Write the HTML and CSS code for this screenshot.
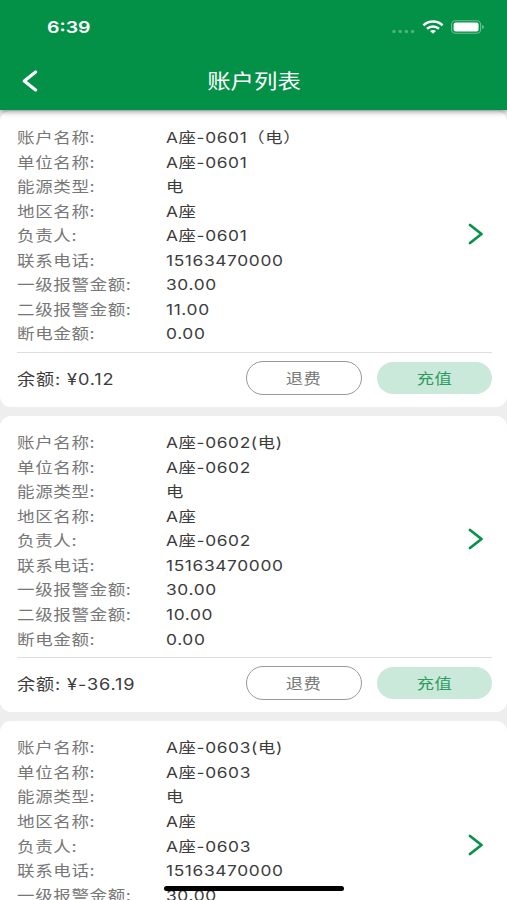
FILE: index.html
```html
<!DOCTYPE html>
<html lang="zh-CN">
<head>
<meta charset="utf-8">
<meta name="viewport" content="width=device-width, initial-scale=1">
<title>账户列表</title>
<link rel="stylesheet" href="styles.css">
</head>
<body>
<div class="app">
  <header class="header">
    <div class="status">
      <span class="time">6:39</span>
      <div class="indicators">
        <svg class="signal" width="23" height="5" viewBox="0 0 23 5"><g fill="#fff" opacity=".3"><circle cx="2" cy="2.5" r="1.7"/><circle cx="8.2" cy="2.5" r="1.7"/><circle cx="14.4" cy="2.5" r="1.7"/><circle cx="20.6" cy="2.5" r="1.7"/></g></svg>
        <svg class="wifi" width="22" height="14" viewBox="0 0 22 14"><g fill="none" stroke="#fff" stroke-width="2.5"><path d="M1.4 5.3C6.8.3 15.2.3 20.6 5.3"/><path d="M5 8.7C8.4 5.7 13.6 5.7 17 8.7"/></g><path d="M8 11c1.8-1.5 4.200-1.500 6 0l-3 2.700z" fill="#fff"/></svg>
        <svg class="battery" width="34" height="14" viewBox="0 0 34 14"><rect x=".6" y=".8" width="29" height="12.400" rx="3.800" fill="none" stroke="#fff" stroke-opacity=".42" stroke-width="1.100"/><rect x="2.600" y="2.400" width="25" height="9.200" rx="2" fill="#fff"/><path d="M31.200 5v4c2-.6 2-3.400 0-4z" fill="#fff" fill-opacity=".5"/></svg>
      </div>
    </div>
    <div class="titlebar">
      <svg class="back" width="16" height="22" viewBox="0 0 16 22"><path d="M13.600 1.900L2.300 11l11.300 9.100" fill="none" stroke="#fff" stroke-width="3.200" stroke-linejoin="round" stroke-linecap="round"/></svg>
      <h1><span>账户列表</span></h1>
    </div>
  </header>

  <main class="list">
    <section class="card">
      <div class="info">
        <dl>
          <dt>账户名称:</dt><dd>A座-0601（电）</dd>
          <dt>单位名称:</dt><dd>A座-0601</dd>
          <dt>能源类型:</dt><dd>电</dd>
          <dt>地区名称:</dt><dd>A座</dd>
          <dt>负责人:</dt><dd>A座-0601</dd>
          <dt>联系电话:</dt><dd>15163470000</dd>
          <dt>一级报警金额:</dt><dd>30.00</dd>
          <dt>二级报警金额:</dt><dd>11.00</dd>
          <dt>断电金额:</dt><dd>0.00</dd>
        </dl>
        <svg class="chevron" width="16" height="22" viewBox="0 0 16 22"><path d="M2 2l11.500 9L2 20" fill="none" stroke="#08914a" stroke-width="2.800" stroke-linejoin="round" stroke-linecap="round"/></svg>
      </div>
      <div class="foot">
        <span class="balance">余额: ¥0.12</span>
        <button class="btn refund"><span>退费</span></button>
        <button class="btn recharge"><span>充值</span></button>
      </div>
    </section>

    <section class="card">
      <div class="info">
        <dl>
          <dt>账户名称:</dt><dd>A座-0602(电)</dd>
          <dt>单位名称:</dt><dd>A座-0602</dd>
          <dt>能源类型:</dt><dd>电</dd>
          <dt>地区名称:</dt><dd>A座</dd>
          <dt>负责人:</dt><dd>A座-0602</dd>
          <dt>联系电话:</dt><dd>15163470000</dd>
          <dt>一级报警金额:</dt><dd>30.00</dd>
          <dt>二级报警金额:</dt><dd>10.00</dd>
          <dt>断电金额:</dt><dd>0.00</dd>
        </dl>
        <svg class="chevron" width="16" height="22" viewBox="0 0 16 22"><path d="M2 2l11.500 9L2 20" fill="none" stroke="#08914a" stroke-width="2.800" stroke-linejoin="round" stroke-linecap="round"/></svg>
      </div>
      <div class="foot">
        <span class="balance">余额: ¥-36.19</span>
        <button class="btn refund"><span>退费</span></button>
        <button class="btn recharge"><span>充值</span></button>
      </div>
    </section>

    <section class="card">
      <div class="info">
        <dl>
          <dt>账户名称:</dt><dd>A座-0603(电)</dd>
          <dt>单位名称:</dt><dd>A座-0603</dd>
          <dt>能源类型:</dt><dd>电</dd>
          <dt>地区名称:</dt><dd>A座</dd>
          <dt>负责人:</dt><dd>A座-0603</dd>
          <dt>联系电话:</dt><dd>15163470000</dd>
          <dt>一级报警金额:</dt><dd>30.00</dd>
        </dl>
        <svg class="chevron" width="16" height="22" viewBox="0 0 16 22"><path d="M2 2l11.500 9L2 20" fill="none" stroke="#08914a" stroke-width="2.800" stroke-linejoin="round" stroke-linecap="round"/></svg>
      </div>
    </section>
  </main>
  <div class="home-indicator"></div>
</div>
</body>
</html>
```
FILE: styles.css
```css
* { box-sizing: border-box; }

body {
  margin: 0;
  font-family: Inter, "Noto Sans CJK SC", sans-serif;
  background: #eee;
}

.app {
  position: relative;
  height: 900px;
  overflow: hidden;
  display: flex;
  flex-direction: column;
}

.header {
  flex: none;
  height: 110px;
  background: #029147;
  color: #fff;
  box-shadow: 0 1px 6px rgba(0, 0, 0, .5);
  z-index: 1;
}

.status {
  height: 54px;
  padding: 0 22px 0 47px;
  display: flex;
  align-items: center;
  justify-content: space-between;
}

.time {
  font-size: 16.500px;
  font-weight: 600;
  transform: scaleX(1.18);
  transform-origin: left;
}

.indicators { display: flex; align-items: center; }
.signal { margin: 9px 7px 0 0; }
.wifi { margin-right: 7px; }

.titlebar {
  height: 56px;
  padding: 0 22px;
  display: grid;
  grid-template-columns: 16px 1fr 16px;
  align-items: center;
}

.back { margin-top: -2px; }

h1 {
  margin: -1px 0 0;
  text-align: center;
  font-size: 20px;
  font-weight: 400;
  line-height: 30px;
}

h1 span { display: inline-block; transform: scaleX(1.17); }

.list {
  flex: none;
  display: flex;
  flex-direction: column;
  gap: 9px;
  padding-top: 1px;
}

.card {
  height: 296.200px;
  padding: 15px 15px 0 17px;
  border-radius: 11px;
  background: #fff;
}

.info {
  height: 226.500px;
  display: flex;
  align-items: center;
  justify-content: space-between;
  border-bottom: 1px solid #dedede;
}

dl {
  align-self: flex-start;
  margin: 0;
  display: grid;
  grid-template-columns: 149px 200px;
  grid-auto-rows: 24.550px;
}

dt, dd {
  margin: 0;
  line-height: 24.550px;
  white-space: nowrap;
  transform: scaleX(1.17);
  transform-origin: left;
}

dt { font-size: 15px; letter-spacing: .5px; color: #777; }
dd { font-size: 14.800px; letter-spacing: .55px; color: #3c3c3c; }

.chevron { margin: -9px 8px 0 0; }

.foot {
  height: 50px;
  display: flex;
  align-items: center;
}

.balance {
  margin-right: auto;
  font-size: 15.500px;
  letter-spacing: .75px;
  color: #3c3c3c;
  transform: scaleX(1.17);
  transform-origin: left;
}

.btn {
  padding: 0;
  border: 0;
  font: inherit;
  font-size: 15px;
  letter-spacing: .6px;
}

.btn span { display: inline-block; transform: scaleX(1.15); }

.refund {
  width: 116px;
  height: 34px;
  margin-right: 15px;
  border: 1px solid #999;
  border-radius: 17px;
  background: #fff;
  color: #777;
}

.recharge {
  width: 115px;
  height: 32px;
  border-radius: 16px;
  background: #cbe9da;
  color: #2b9c62;
}

.home-indicator {
  position: absolute;
  left: 164px;
  bottom: 9px;
  width: 180px;
  height: 5px;
  border-radius: 3px;
  background: #000;
  z-index: 2;
}
```
